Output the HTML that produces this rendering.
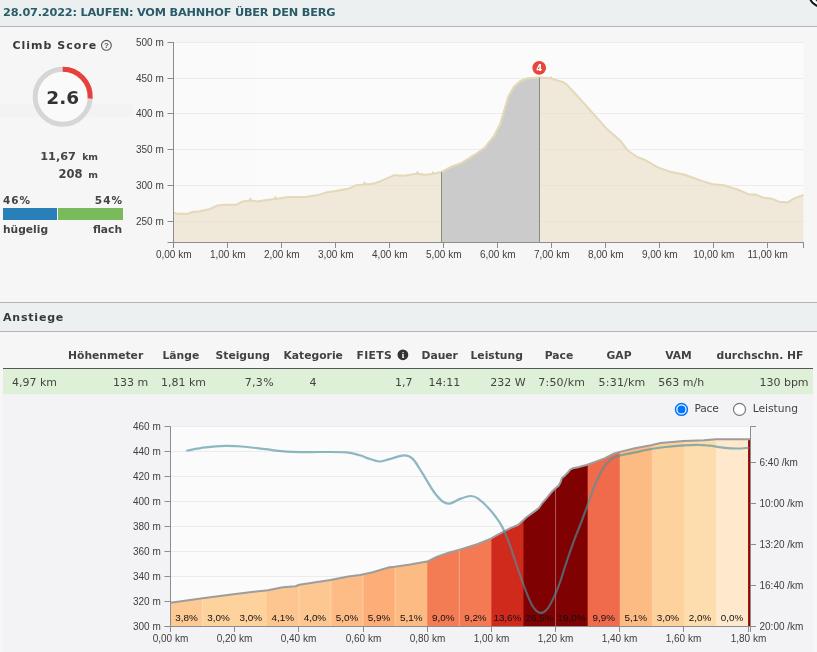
<!DOCTYPE html>
<html lang="de"><head><meta charset="utf-8"><title>Anstiege</title>
<style>
html,body{margin:0;padding:0}
body{width:817px;height:652px;overflow:hidden;background:#f6f6f6;position:relative;
 font-family:"DejaVu Sans","Liberation Sans",sans-serif;color:#444;font-size:11px}
#wrap{position:absolute;left:0;top:0;width:817px;height:652px;overflow:hidden;will-change:opacity;opacity:0.9999}
.abs{position:absolute}
.tk{font-family:"Liberation Sans",Arial,sans-serif;font-size:10px;fill:#3e3e3e}
.gl{font-family:"Liberation Sans",Arial,sans-serif;font-size:9.9px;fill:#111}
.bar{position:absolute;left:0;width:817px;background:rgba(236,240,241,0.996);box-sizing:border-box}
#hdr{top:0;height:27px;border-bottom:1px solid #b4b4b4}
#hdr h1{position:absolute;left:3px;top:6px;margin:0;font-size:11.3px;line-height:14px;font-weight:bold;color:#2b5a68;white-space:nowrap;letter-spacing:-0.2px}
#ans{top:302px;height:30px;border-top:1px solid #b4b4b4;border-bottom:1px solid #b4b4b4}
#ans h2{position:absolute;left:3px;top:8px;margin:0;font-size:11px;line-height:14px;font-weight:bold;color:#3a3a3a;letter-spacing:0.8px;white-space:nowrap}
.b{font-weight:bold}
.t{position:absolute;white-space:nowrap;line-height:14px}
.r{text-align:right}
.c{text-align:center}
#row{position:absolute;left:3px;top:369px;width:810px;height:25px;background:#dff0d8}
#thl{position:absolute;left:3px;top:368px;width:810px;height:1px;background:#555}
.th{font-weight:bold;color:#424242;font-size:10.75px;top:348.5px}
.td{color:#444;font-size:11px;top:376px}
.ls2{letter-spacing:0.2px}
.ls3{letter-spacing:0.35px}
</style></head><body><div id="wrap">
<div class="bar" id="hdr"><h1>28.07.2022: LAUFEN: VOM BAHNHOF ÜBER DEN BERG</h1></div>
<svg class="abs" style="right:0;top:0" width="12" height="10" viewBox="805 0 12 10"><circle cx="822" cy="-6" r="13.8" fill="#111"/><circle cx="822" cy="-6" r="11.8" fill="#fff"/><circle cx="822" cy="-6" r="9" fill="#111"/></svg>
<div class="abs" style="left:0;top:104px;width:133px;height:13px;background:#f3f3f3"></div>
<div class="t b" style="left:12.5px;top:39px;font-size:11px;letter-spacing:1px;color:#3a3a3a">Climb Score</div>
<svg class="abs" style="left:100px;top:39px" width="13" height="13" viewBox="0 0 13 13"><circle cx="6.4" cy="6.3" r="4.9" fill="none" stroke="#555" stroke-width="1.1"/><text x="6.4" y="9.2" text-anchor="middle" font-family="Liberation Sans,Arial,sans-serif" font-weight="bold" font-size="8" fill="#555">?</text></svg>
<svg class="abs" style="left:28px;top:62px" width="70" height="70" viewBox="28 62 70 70"><circle cx="62.7" cy="96.8" r="27.5" fill="#fbfbfb" stroke="#d6d6d6" stroke-width="5"/><path d="M62.7 69.3 A27.5 27.5 0 0 1 90.15 98.53" fill="none" stroke="#e8413b" stroke-width="5"/><text x="62.7" y="103.6" text-anchor="middle" font-family="DejaVu Sans,Liberation Sans,sans-serif" font-weight="bold" font-size="18.5" fill="#333">2.6</text></svg>
<div class="t b r" style="left:20px;width:78px;top:150px;font-size:11.3px"><span>11,67</span> <span style="font-size:9.3px;margin-left:2.3px">km</span></div>
<div class="t b r" style="left:20px;width:78px;top:167px;font-size:11.5px"><span>208</span> <span style="font-size:9.3px;margin-left:1.8px">m</span></div>
<div class="t b" style="left:3px;top:192.5px;font-size:10.5px;letter-spacing:1px">46%</div>
<div class="t b r" style="left:63px;width:60px;top:192.5px;font-size:10.5px;letter-spacing:1px">54%</div>
<div class="abs" style="left:3px;top:208px;width:54px;height:12px;background:#2980b9"></div>
<div class="abs" style="left:58px;top:208px;width:65px;height:12px;background:#78ba5c"></div>
<div class="t b" style="left:3px;top:223px;font-size:10.7px">hügelig</div>
<div class="t b r" style="left:63px;width:59px;top:223px;font-size:10.7px">flach</div>
<svg class="abs" style="left:0;top:27px" width="817" height="275" viewBox="0 27 817 275">
<rect x="174" y="42" width="629.5" height="200.5" fill="#fbfbfb"/>
<line x1="174" x2="803.5" y1="42.5" y2="42.5" stroke="#ececec" stroke-width="1"/>
<line x1="174" x2="803.5" y1="78.5" y2="78.5" stroke="#ececec" stroke-width="1"/>
<line x1="174" x2="803.5" y1="113.5" y2="113.5" stroke="#ececec" stroke-width="1"/>
<line x1="174" x2="803.5" y1="149.5" y2="149.5" stroke="#ececec" stroke-width="1"/>
<line x1="174" x2="803.5" y1="185.5" y2="185.5" stroke="#ececec" stroke-width="1"/>
<line x1="174" x2="803.5" y1="221.5" y2="221.5" stroke="#ececec" stroke-width="1"/>
<path d="M173.5 212.7 L177.5 213.8 L187.6 213.8 L192.6 212.0 L200.1 211.2 L210.2 208.9 L217.7 205.4 L224.0 204.7 L236.5 204.7 L242.8 201.4 L249.7 200.4 L250.3 198.6 L250.9 200.4 L256.6 201.4 L265.4 200.2 L274.8 199.1 L275.4 197.2 L276.0 198.9 L288.0 197.1 L305.5 196.9 L318.0 195.1 L325.6 192.6 L335.6 191.1 L349.4 188.4 L355.7 185.3 L363.9 184.5 L364.5 182.5 L365.1 184.3 L370.0 184.0 L375.0 183.3 L382.3 180.4 L394.5 175.2 L403.7 175.8 L416.9 173.8 L417.5 172.0 L418.1 173.8 L425.2 174.8 L432.3 174.0 L432.9 172.4 L433.5 173.8 L441.5 172.1 L449.8 167.5 L462.0 162.9 L474.3 155.2 L485.0 147.5 L494.2 135.9 L500.4 123.6 L505.0 108.3 L508.7 96.0 L514.2 86.8 L520.3 81.3 L526.4 78.8 L539.3 77.6 L550.4 78.3 L551.0 77.4 L551.6 78.6 L563.3 82.2 L566.7 84.4 L576.9 95.5 L593.7 114.1 L607.2 129.3 L620.7 141.1 L627.5 150.2 L637.6 157.3 L644.3 159.6 L657.8 167.4 L671.3 172.1 L684.8 174.8 L701.7 180.9 L711.8 183.9 L725.3 185.6 L738.8 190.0 L748.9 194.4 L755.6 194.4 L762.4 197.4 L770.8 198.4 L779.2 201.8 L787.7 202.4 L794.4 198.4 L803.5 195.0 L803.5 242.5 L173.5 242.5 Z" fill="#e9ddc4" fill-opacity="0.6"/>
<path d="M173.5 212.7 L177.5 213.8 L187.6 213.8 L192.6 212.0 L200.1 211.2 L210.2 208.9 L217.7 205.4 L224.0 204.7 L236.5 204.7 L242.8 201.4 L249.7 200.4 L250.3 198.6 L250.9 200.4 L256.6 201.4 L265.4 200.2 L274.8 199.1 L275.4 197.2 L276.0 198.9 L288.0 197.1 L305.5 196.9 L318.0 195.1 L325.6 192.6 L335.6 191.1 L349.4 188.4 L355.7 185.3 L363.9 184.5 L364.5 182.5 L365.1 184.3 L370.0 184.0 L375.0 183.3 L382.3 180.4 L394.5 175.2 L403.7 175.8 L416.9 173.8 L417.5 172.0 L418.1 173.8 L425.2 174.8 L432.3 174.0 L432.9 172.4 L433.5 173.8 L441.5 172.1 L449.8 167.5 L462.0 162.9 L474.3 155.2 L485.0 147.5 L494.2 135.9 L500.4 123.6 L505.0 108.3 L508.7 96.0 L514.2 86.8 L520.3 81.3 L526.4 78.8 L539.3 77.6 L550.4 78.3 L551.0 77.4 L551.6 78.6 L563.3 82.2 L566.7 84.4 L576.9 95.5 L593.7 114.1 L607.2 129.3 L620.7 141.1 L627.5 150.2 L637.6 157.3 L644.3 159.6 L657.8 167.4 L671.3 172.1 L684.8 174.8 L701.7 180.9 L711.8 183.9 L725.3 185.6 L738.8 190.0 L748.9 194.4 L755.6 194.4 L762.4 197.4 L770.8 198.4 L779.2 201.8 L787.7 202.4 L794.4 198.4 L803.5 195.0" fill="none" stroke="#e3d8b9" stroke-width="2" stroke-linejoin="round"/>
<path d="M441.5 172.1 L449.8 167.5 L462.0 162.9 L474.3 155.2 L485.0 147.5 L494.2 135.9 L500.4 123.6 L505.0 108.3 L508.7 96.0 L514.2 86.8 L520.3 81.3 L526.4 78.8 L539.3 77.6 L539.5 242.5 L441.5 242.5 Z" fill="#cbcbcb"/>
<path d="M441.5 172.1 L449.8 167.5 L462.0 162.9 L474.3 155.2 L485.0 147.5 L494.2 135.9 L500.4 123.6 L505.0 108.3 L508.7 96.0 L514.2 86.8 L520.3 81.3 L526.4 78.8 L539.3 77.6" fill="none" stroke="#e3d8b9" stroke-width="2" stroke-linejoin="round"/>
<line x1="441.5" x2="441.5" y1="172.1" y2="242.5" stroke="#8a8a8a" stroke-width="1"/>
<line x1="539.5" x2="539.5" y1="77.6" y2="242.5" stroke="#8a8a8a" stroke-width="1"/>
<line x1="173.5" x2="173.5" y1="42" y2="243" stroke="#8c8c8c" stroke-width="1"/>
<line x1="167.5" x2="804" y1="242.5" y2="242.5" stroke="#8c8c8c" stroke-width="1"/>
<line x1="167.5" x2="173.5" y1="42.5" y2="42.5" stroke="#8c8c8c" stroke-width="1"/>
<text class="tk" x="163.8" y="46.3" text-anchor="end">500 m</text>
<line x1="167.5" x2="173.5" y1="78.5" y2="78.5" stroke="#8c8c8c" stroke-width="1"/>
<text class="tk" x="163.8" y="82.3" text-anchor="end">450 m</text>
<line x1="167.5" x2="173.5" y1="113.5" y2="113.5" stroke="#8c8c8c" stroke-width="1"/>
<text class="tk" x="163.8" y="117.3" text-anchor="end">400 m</text>
<line x1="167.5" x2="173.5" y1="149.5" y2="149.5" stroke="#8c8c8c" stroke-width="1"/>
<text class="tk" x="163.8" y="153.3" text-anchor="end">350 m</text>
<line x1="167.5" x2="173.5" y1="185.5" y2="185.5" stroke="#8c8c8c" stroke-width="1"/>
<text class="tk" x="163.8" y="189.3" text-anchor="end">300 m</text>
<line x1="167.5" x2="173.5" y1="221.5" y2="221.5" stroke="#8c8c8c" stroke-width="1"/>
<text class="tk" x="163.8" y="225.3" text-anchor="end">250 m</text>
<line x1="173.5" x2="173.5" y1="242.5" y2="248" stroke="#8c8c8c" stroke-width="1"/>
<text class="tk" x="173.7" y="257.5" text-anchor="middle">0,00 km</text>
<line x1="227.5" x2="227.5" y1="242.5" y2="248" stroke="#8c8c8c" stroke-width="1"/>
<text class="tk" x="227.7" y="257.5" text-anchor="middle">1,00 km</text>
<line x1="281.5" x2="281.5" y1="242.5" y2="248" stroke="#8c8c8c" stroke-width="1"/>
<text class="tk" x="281.7" y="257.5" text-anchor="middle">2,00 km</text>
<line x1="335.5" x2="335.5" y1="242.5" y2="248" stroke="#8c8c8c" stroke-width="1"/>
<text class="tk" x="335.7" y="257.5" text-anchor="middle">3,00 km</text>
<line x1="389.5" x2="389.5" y1="242.5" y2="248" stroke="#8c8c8c" stroke-width="1"/>
<text class="tk" x="389.7" y="257.5" text-anchor="middle">4,00 km</text>
<line x1="443.5" x2="443.5" y1="242.5" y2="248" stroke="#8c8c8c" stroke-width="1"/>
<text class="tk" x="443.7" y="257.5" text-anchor="middle">5,00 km</text>
<line x1="497.5" x2="497.5" y1="242.5" y2="248" stroke="#8c8c8c" stroke-width="1"/>
<text class="tk" x="497.7" y="257.5" text-anchor="middle">6,00 km</text>
<line x1="551.5" x2="551.5" y1="242.5" y2="248" stroke="#8c8c8c" stroke-width="1"/>
<text class="tk" x="551.7" y="257.5" text-anchor="middle">7,00 km</text>
<line x1="605.5" x2="605.5" y1="242.5" y2="248" stroke="#8c8c8c" stroke-width="1"/>
<text class="tk" x="605.7" y="257.5" text-anchor="middle">8,00 km</text>
<line x1="659.5" x2="659.5" y1="242.5" y2="248" stroke="#8c8c8c" stroke-width="1"/>
<text class="tk" x="659.7" y="257.5" text-anchor="middle">9,00 km</text>
<line x1="713.5" x2="713.5" y1="242.5" y2="248" stroke="#8c8c8c" stroke-width="1"/>
<text class="tk" x="713.7" y="257.5" text-anchor="middle">10,00 km</text>
<line x1="767.5" x2="767.5" y1="242.5" y2="248" stroke="#8c8c8c" stroke-width="1"/>
<text class="tk" x="767.7" y="257.5" text-anchor="middle">11,00 km</text>
<line x1="803.5" x2="803.5" y1="242.5" y2="248" stroke="#8c8c8c" stroke-width="1"/>
<circle cx="539.2" cy="67.8" r="6.9" fill="#e8453c"/>
<text x="539.2" y="70.9" text-anchor="middle" font-family="DejaVu Sans, Liberation Sans, sans-serif" font-weight="bold" font-size="8.6" fill="#fff">4</text>
</svg>
<div class="bar" id="ans"><h2>Anstiege</h2></div>
<div class="abs" style="left:3px;top:394px;width:810px;height:258px;background:#f3f3f6"></div>
<div id="row"></div><div id="thl"></div>
<div class="t th" style="left:68.0px;width:76.0px">Höhenmeter</div>
<div class="t th" style="left:162.5px;width:37.0px">Länge</div>
<div class="t th" style="left:215.5px;width:56.0px">Steigung</div>
<div class="t th" style="left:283.5px;width:60.0px">Kategorie</div>
<div class="t th ls3" style="left:356.5px;width:38.0px">FIETS</div>
<div class="t th" style="left:421.5px;width:37.0px">Dauer</div>
<div class="t th" style="left:470.5px;width:52.0px">Leistung</div>
<div class="t th c" style="left:539.0px;width:40.0px">Pace</div>
<div class="t th c" style="left:599.0px;width:40.0px">GAP</div>
<div class="t th c" style="left:658.5px;width:40.0px">VAM</div>
<div class="t th" style="left:716.5px;width:88.0px">durchschn. HF</div>
<svg class="abs" style="left:397px;top:349px" width="12" height="12" viewBox="0 0 12 12"><circle cx="5.9" cy="5.8" r="5.4" fill="#333"/><text x="5.9" y="8.9" text-anchor="middle" font-family="Liberation Serif,serif" font-weight="bold" font-size="9" fill="#fff">i</text></svg>
<div class="t td" style="left:12.0px;width:50.0px">4,97 km</div>
<div class="t td r" style="left:88.0px;width:60.3px">133 m</div>
<div class="t td" style="left:161.0px;width:50.0px">1,81 km</div>
<div class="t td r ls3" style="left:215.0px;width:59.0px">7,3%</div>
<div class="t td c" style="left:293.0px;width:40.0px">4</div>
<div class="t td r" style="left:372.0px;width:40.5px">1,7</div>
<div class="t td" style="left:428.5px;width:40.0px">14:11</div>
<div class="t td r" style="left:466.0px;width:59.7px">232 W</div>
<div class="t td ls2" style="left:538.3px;width:50.0px">7:50/km</div>
<div class="t td ls2" style="left:598.6px;width:50.0px">5:31/km</div>
<div class="t td" style="left:658.3px;width:50.0px">563 m/h</div>
<div class="t td r" style="left:728.0px;width:80.6px">130 bpm</div>
<svg class="abs" style="left:672px;top:400px" width="80" height="20" viewBox="672 400 80 20"><circle cx="681.45" cy="409.4" r="5.95" fill="#fff" stroke="#0075ff" stroke-width="1.5"/><circle cx="681.45" cy="409.4" r="3.95" fill="#0075ff"/><circle cx="739.5" cy="409.4" r="6" fill="#fff" stroke="#767676" stroke-width="1.15"/></svg>
<div class="t" style="left:694.5px;top:402px;font-size:10.7px;letter-spacing:-0.2px;color:#444">Pace</div>
<div class="t" style="left:752.7px;top:402px;font-size:10.7px;color:#444">Leistung</div>
<svg class="abs" style="left:0;top:420px" width="817" height="232" viewBox="0 420 817 232">
<defs><clipPath id="elevclip"><path d="M170.5 602.7 L202.6 598.2 L235.3 594.0 L267.9 590.2 L282.9 587.2 L295.5 586.2 L299.3 584.7 L315.6 582.2 L330.6 580.1 L348.2 576.6 L360.0 574.9 L371.8 572.5 L389.5 567.2 L394.8 566.7 L410.1 564.6 L427.2 561.6 L436.6 556.9 L448.4 552.8 L459.6 549.6 L477.8 544.0 L490.8 538.7 L498.4 534.3 L505.0 530.8 L511.5 527.6 L518.0 525.0 L523.9 519.8 L525.9 517.8 L531.1 513.9 L535.6 510.6 L538.9 508.0 L542.2 503.2 L546.7 498.2 L551.9 491.7 L555.2 488.5 L558.5 485.9 L560.4 482.6 L562.0 478.0 L565.0 475.4 L567.6 472.8 L570.2 469.6 L572.8 468.3 L578.0 467.2 L586.5 465.0 L593.7 462.4 L605.0 458.1 L614.3 453.4 L619.9 451.9 L634.8 448.3 L651.0 445.2 L660.5 443.1 L683.7 441.1 L704.2 440.3 L715.8 439.3 L750.5 439.3 L750.5 626.5 L170.5 626.5 Z"/></clipPath></defs>
<rect x="171" y="426.5" width="579.7" height="200.0" fill="#fbfbfb"/>
<line x1="171" x2="750.5" y1="626.5" y2="626.5" stroke="#ececec" stroke-width="1"/>
<line x1="171" x2="750.5" y1="601.5" y2="601.5" stroke="#ececec" stroke-width="1"/>
<line x1="171" x2="750.5" y1="576.5" y2="576.5" stroke="#ececec" stroke-width="1"/>
<line x1="171" x2="750.5" y1="551.5" y2="551.5" stroke="#ececec" stroke-width="1"/>
<line x1="171" x2="750.5" y1="526.5" y2="526.5" stroke="#ececec" stroke-width="1"/>
<line x1="171" x2="750.5" y1="501.5" y2="501.5" stroke="#ececec" stroke-width="1"/>
<line x1="171" x2="750.5" y1="476.5" y2="476.5" stroke="#ececec" stroke-width="1"/>
<line x1="171" x2="750.5" y1="451.5" y2="451.5" stroke="#ececec" stroke-width="1"/>
<line x1="171" x2="750.5" y1="426.5" y2="426.5" stroke="#ececec" stroke-width="1"/>
<g clip-path="url(#elevclip)">
<rect x="170.50" y="430" width="32.69" height="200" fill="#fdc994"/>
<rect x="202.59" y="430" width="32.69" height="200" fill="#fdd29d"/>
<rect x="234.68" y="430" width="32.69" height="200" fill="#fdd29d"/>
<rect x="266.77" y="430" width="32.69" height="200" fill="#fdc690"/>
<rect x="298.86" y="430" width="32.69" height="200" fill="#fdc791"/>
<rect x="330.95" y="430" width="32.69" height="200" fill="#fdbc85"/>
<rect x="363.04" y="430" width="32.69" height="200" fill="#fdae77"/>
<rect x="395.13" y="430" width="32.69" height="200" fill="#fdbb84"/>
<rect x="427.22" y="430" width="32.69" height="200" fill="#f47c54"/>
<rect x="459.31" y="430" width="32.69" height="200" fill="#f37a53"/>
<rect x="491.40" y="430" width="32.69" height="200" fill="#cf2a1c"/>
<rect x="523.49" y="430" width="32.69" height="200" fill="#7f0000"/>
<rect x="555.58" y="430" width="32.69" height="200" fill="#7f0000"/>
<rect x="587.67" y="430" width="32.69" height="200" fill="#ef6b4b"/>
<rect x="619.76" y="430" width="32.69" height="200" fill="#fdbb84"/>
<rect x="651.85" y="430" width="32.69" height="200" fill="#fdd29d"/>
<rect x="683.94" y="430" width="32.69" height="200" fill="#fddcad"/>
<rect x="716.03" y="430" width="32.69" height="200" fill="#fee9cd"/>
<rect x="748.1" y="430" width="1.9" height="200" fill="#960000"/>
<line x1="202.59" x2="202.59" y1="430" y2="627" stroke="#fff" stroke-opacity="0.3" stroke-width="1"/>
<line x1="234.68" x2="234.68" y1="430" y2="627" stroke="#fff" stroke-opacity="0" stroke-width="1"/>
<line x1="266.77" x2="266.77" y1="430" y2="627" stroke="#fff" stroke-opacity="0" stroke-width="1"/>
<line x1="298.86" x2="298.86" y1="430" y2="627" stroke="#fff" stroke-opacity="0.3" stroke-width="1"/>
<line x1="330.95" x2="330.95" y1="430" y2="627" stroke="#fff" stroke-opacity="0.3" stroke-width="1"/>
<line x1="363.04" x2="363.04" y1="430" y2="627" stroke="#fff" stroke-opacity="0.3" stroke-width="1"/>
<line x1="395.13" x2="395.13" y1="430" y2="627" stroke="#fff" stroke-opacity="0.3" stroke-width="1"/>
<line x1="427.22" x2="427.22" y1="430" y2="627" stroke="#fff" stroke-opacity="0" stroke-width="1"/>
<line x1="459.31" x2="459.31" y1="430" y2="627" stroke="#fff" stroke-opacity="0.3" stroke-width="1"/>
<line x1="491.40" x2="491.40" y1="430" y2="627" stroke="#fff" stroke-opacity="0" stroke-width="1"/>
<line x1="523.49" x2="523.49" y1="430" y2="627" stroke="#fff" stroke-opacity="0" stroke-width="1"/>
<line x1="555.58" x2="555.58" y1="430" y2="627" stroke="#fff" stroke-opacity="0.36" stroke-width="1"/>
<line x1="587.67" x2="587.67" y1="430" y2="627" stroke="#fff" stroke-opacity="0" stroke-width="1"/>
<line x1="619.76" x2="619.76" y1="430" y2="627" stroke="#fff" stroke-opacity="0" stroke-width="1"/>
<line x1="651.85" x2="651.85" y1="430" y2="627" stroke="#fff" stroke-opacity="0" stroke-width="1"/>
<line x1="683.94" x2="683.94" y1="430" y2="627" stroke="#fff" stroke-opacity="0" stroke-width="1"/>
<line x1="716.03" x2="716.03" y1="430" y2="627" stroke="#fff" stroke-opacity="0" stroke-width="1"/>
</g>
<path d="M170.5 602.7 L202.6 598.2 L235.3 594.0 L267.9 590.2 L282.9 587.2 L295.5 586.2 L299.3 584.7 L315.6 582.2 L330.6 580.1 L348.2 576.6 L360.0 574.9 L371.8 572.5 L389.5 567.2 L394.8 566.7 L410.1 564.6 L427.2 561.6 L436.6 556.9 L448.4 552.8 L459.6 549.6 L477.8 544.0 L490.8 538.7 L498.4 534.3 L505.0 530.8 L511.5 527.6 L518.0 525.0 L523.9 519.8 L525.9 517.8 L531.1 513.9 L535.6 510.6 L538.9 508.0 L542.2 503.2 L546.7 498.2 L551.9 491.7 L555.2 488.5 L558.5 485.9 L560.4 482.6 L562.0 478.0 L565.0 475.4 L567.6 472.8 L570.2 469.6 L572.8 468.3 L578.0 467.2 L586.5 465.0 L593.7 462.4 L605.0 458.1 L614.3 453.4 L619.9 451.9 L634.8 448.3 L651.0 445.2 L660.5 443.1 L683.7 441.1 L704.2 440.3 L715.8 439.3 L750.5 439.3" fill="none" stroke="#9d9d9d" stroke-width="2" stroke-linejoin="round"/>
<path d="M187.2 450.5 C190.2 450.0 199.0 448.2 205.4 447.4 C211.8 446.6 218.4 446.0 225.4 445.9 C232.4 445.8 240.5 446.4 247.2 447.0 C253.9 447.6 259.3 448.5 265.4 449.2 C271.5 449.9 277.5 450.9 283.6 451.4 C289.7 451.9 295.6 452.0 301.8 452.1 C308.1 452.2 313.7 451.9 321.1 452.0 C328.5 452.1 339.7 451.8 346.2 452.4 C352.7 452.9 356.2 454.3 360.0 455.3 C363.8 456.3 365.6 457.6 368.8 458.6 C372.0 459.6 375.7 461.4 379.1 461.5 C382.6 461.6 385.3 460.1 389.5 459.1 C393.7 458.1 400.3 455.3 404.2 455.3 C408.1 455.3 410.1 456.2 413.0 459.1 C415.9 462.0 418.5 467.0 421.9 472.4 C425.3 477.8 430.2 486.7 433.6 491.5 C437.0 496.3 439.8 499.3 442.5 501.3 C445.2 503.3 446.9 504.0 449.8 503.6 C452.7 503.2 456.7 500.2 460.1 498.9 C463.6 497.6 467.6 496.1 470.5 496.0 C473.4 495.9 474.6 496.1 477.8 498.3 C481.0 500.5 485.7 504.7 489.6 509.2 C493.5 513.7 498.0 519.3 501.4 525.4 C504.8 531.5 507.2 538.1 510.2 546.0 C513.1 553.9 516.1 564.1 519.1 572.5 C522.1 580.9 525.5 590.2 527.9 596.1 C530.3 602.0 531.7 605.1 533.8 607.9 C535.9 610.7 538.1 612.6 540.3 612.9 C542.5 613.1 544.6 612.2 547.0 609.4 C549.4 606.6 552.2 600.8 554.4 596.1 C556.6 591.4 558.5 586.3 560.3 581.4 C562.1 576.5 562.7 573.5 565.0 566.7 C567.3 559.9 571.1 548.5 574.0 540.7 C576.9 532.9 579.7 526.4 582.1 520.0 C584.5 513.6 586.2 508.7 588.6 502.3 C591.0 495.9 593.9 487.3 596.3 481.7 C598.6 476.1 600.6 472.2 602.7 468.8 C604.8 465.4 607.0 463.1 609.1 461.1 C611.2 459.1 613.8 457.7 615.6 456.8 C617.4 455.9 616.7 456.2 619.9 455.5 C623.1 454.8 629.6 453.5 634.8 452.4 C640.0 451.3 645.9 449.9 651.0 449.0 C656.1 448.1 660.2 447.6 665.7 447.0 C671.2 446.4 678.1 445.8 683.7 445.4 C689.3 445.0 694.8 444.8 699.1 444.9 C703.4 444.9 705.1 445.2 709.4 445.7 C713.7 446.2 720.1 447.3 724.8 447.8 C729.5 448.3 733.8 448.5 737.7 448.5 C741.7 448.5 746.7 447.9 748.5 447.8" fill="none" stroke="#4c92a0" stroke-opacity="0.64" stroke-width="2.2" stroke-linecap="round"/>
<text class="gl" x="186.5" y="620.8" text-anchor="middle">3,8%</text>
<text class="gl" x="218.6" y="620.8" text-anchor="middle">3,0%</text>
<text class="gl" x="250.7" y="620.8" text-anchor="middle">3,0%</text>
<text class="gl" x="282.8" y="620.8" text-anchor="middle">4,1%</text>
<text class="gl" x="314.9" y="620.8" text-anchor="middle">4,0%</text>
<text class="gl" x="347.0" y="620.8" text-anchor="middle">5,0%</text>
<text class="gl" x="379.1" y="620.8" text-anchor="middle">5,9%</text>
<text class="gl" x="411.2" y="620.8" text-anchor="middle">5,1%</text>
<text class="gl" x="443.3" y="620.8" text-anchor="middle">9,0%</text>
<text class="gl" x="475.4" y="620.8" text-anchor="middle">9,2%</text>
<text class="gl" x="507.4" y="620.8" text-anchor="middle">13,6%</text>
<text class="gl" x="539.5" y="620.8" text-anchor="middle">26,5%</text>
<text class="gl" x="571.6" y="620.8" text-anchor="middle">19,0%</text>
<text class="gl" x="603.7" y="620.8" text-anchor="middle">9,9%</text>
<text class="gl" x="635.8" y="620.8" text-anchor="middle">5,1%</text>
<text class="gl" x="667.9" y="620.8" text-anchor="middle">3,0%</text>
<text class="gl" x="700.0" y="620.8" text-anchor="middle">2,0%</text>
<text class="gl" x="732.1" y="620.8" text-anchor="middle">0,0%</text>
<line x1="170.5" x2="170.5" y1="426.5" y2="627" stroke="#8c8c8c"/>
<line x1="164.5" x2="751" y1="626.5" y2="626.5" stroke="#8c8c8c"/>
<line x1="750.5" x2="750.5" y1="426.5" y2="632" stroke="#8c8c8c"/>
<line x1="164.5" x2="170.5" y1="626.5" y2="626.5" stroke="#8c8c8c"/>
<text class="tk" x="160.8" y="629.8" text-anchor="end">300 m</text>
<line x1="164.5" x2="170.5" y1="601.5" y2="601.5" stroke="#8c8c8c"/>
<text class="tk" x="160.8" y="604.8" text-anchor="end">320 m</text>
<line x1="164.5" x2="170.5" y1="576.5" y2="576.5" stroke="#8c8c8c"/>
<text class="tk" x="160.8" y="579.8" text-anchor="end">340 m</text>
<line x1="164.5" x2="170.5" y1="551.5" y2="551.5" stroke="#8c8c8c"/>
<text class="tk" x="160.8" y="554.8" text-anchor="end">360 m</text>
<line x1="164.5" x2="170.5" y1="526.5" y2="526.5" stroke="#8c8c8c"/>
<text class="tk" x="160.8" y="529.8" text-anchor="end">380 m</text>
<line x1="164.5" x2="170.5" y1="501.5" y2="501.5" stroke="#8c8c8c"/>
<text class="tk" x="160.8" y="504.8" text-anchor="end">400 m</text>
<line x1="164.5" x2="170.5" y1="476.5" y2="476.5" stroke="#8c8c8c"/>
<text class="tk" x="160.8" y="479.8" text-anchor="end">420 m</text>
<line x1="164.5" x2="170.5" y1="451.5" y2="451.5" stroke="#8c8c8c"/>
<text class="tk" x="160.8" y="454.8" text-anchor="end">440 m</text>
<line x1="164.5" x2="170.5" y1="426.5" y2="426.5" stroke="#8c8c8c"/>
<text class="tk" x="160.8" y="429.8" text-anchor="end">460 m</text>
<line x1="170.5" x2="170.5" y1="626.5" y2="632" stroke="#8c8c8c"/>
<text class="tk" x="170.5" y="642" text-anchor="middle">0,00 km</text>
<line x1="234.5" x2="234.5" y1="626.5" y2="632" stroke="#8c8c8c"/>
<text class="tk" x="234.5" y="642" text-anchor="middle">0,20 km</text>
<line x1="298.5" x2="298.5" y1="626.5" y2="632" stroke="#8c8c8c"/>
<text class="tk" x="298.5" y="642" text-anchor="middle">0,40 km</text>
<line x1="363.5" x2="363.5" y1="626.5" y2="632" stroke="#8c8c8c"/>
<text class="tk" x="363.5" y="642" text-anchor="middle">0,60 km</text>
<line x1="427.5" x2="427.5" y1="626.5" y2="632" stroke="#8c8c8c"/>
<text class="tk" x="427.5" y="642" text-anchor="middle">0,80 km</text>
<line x1="491.5" x2="491.5" y1="626.5" y2="632" stroke="#8c8c8c"/>
<text class="tk" x="491.5" y="642" text-anchor="middle">1,00 km</text>
<line x1="555.5" x2="555.5" y1="626.5" y2="632" stroke="#8c8c8c"/>
<text class="tk" x="555.5" y="642" text-anchor="middle">1,20 km</text>
<line x1="619.5" x2="619.5" y1="626.5" y2="632" stroke="#8c8c8c"/>
<text class="tk" x="619.5" y="642" text-anchor="middle">1,40 km</text>
<line x1="683.5" x2="683.5" y1="626.5" y2="632" stroke="#8c8c8c"/>
<text class="tk" x="683.5" y="642" text-anchor="middle">1,60 km</text>
<line x1="748.5" x2="748.5" y1="626.5" y2="632" stroke="#8c8c8c"/>
<text class="tk" x="748.5" y="642" text-anchor="middle">1,80 km</text>
<line x1="750.5" x2="756" y1="626.5" y2="626.5" stroke="#8c8c8c"/>
<text class="tk" x="759.5" y="630.4">20:00 /km</text>
<line x1="750.5" x2="756" y1="585.5" y2="585.5" stroke="#8c8c8c"/>
<text class="tk" x="759.5" y="589.4">16:40 /km</text>
<line x1="750.5" x2="756" y1="544.5" y2="544.5" stroke="#8c8c8c"/>
<text class="tk" x="759.5" y="548.4">13:20 /km</text>
<line x1="750.5" x2="756" y1="503.5" y2="503.5" stroke="#8c8c8c"/>
<text class="tk" x="759.5" y="507.4">10:00 /km</text>
<line x1="750.5" x2="756" y1="462.5" y2="462.5" stroke="#8c8c8c"/>
<text class="tk" x="759.5" y="466.4">6:40 /km</text>
<line x1="750.5" x2="756" y1="426.5" y2="426.5" stroke="#8c8c8c"/>
</svg>
</div></body></html>
